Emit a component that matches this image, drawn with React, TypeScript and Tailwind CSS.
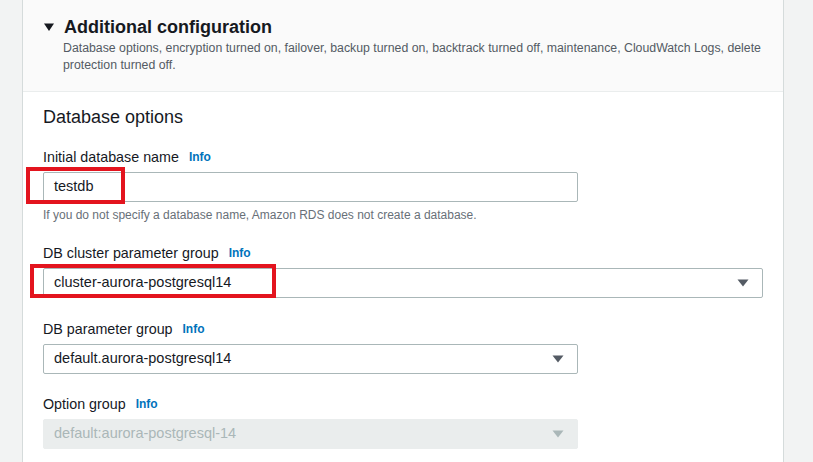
import { Fragment } from "react";

type FieldProps = {
  label: string;
  value: string;
  kind: "input" | "select" | "disabled";
  wide?: boolean;
  top: string;
  highlight?: string;
};

function Caret({ muted }: { muted?: boolean }) {
  return (
    <svg width="12" height="8" viewBox="0 0 12 8" aria-hidden="true">
      <path d="M0.5 0.5h11L6 7.5z" fill={muted ? "#aab7b8" : "#545b64"} />
    </svg>
  );
}

function Field({ label, value, kind, wide, top, highlight }: FieldProps) {
  const disabled = kind === "disabled";
  return (
    <div className={top}>
      <div className="flex items-center gap-[10px] leading-[20px]">
        <span className="text-[14.3px] text-[#16191f]">{label}</span>
        <span className="text-[12px] font-bold text-[#0073bb]">Info</span>
      </div>
      <div className={`relative mt-[5px] ${wide ? "w-[720px]" : "w-[535px]"}`}>
        <div
          className={`flex h-[30px] items-center justify-between rounded-[2px] border pl-[10px] pr-[13px] text-[14.5px] ${
            disabled
              ? "border-[#eaeded] bg-[#eaeded] text-[#aab7b8]"
              : "border-[#aab7b8] bg-white text-[#16191f]"
          }`}
        >
          <span>{value}</span>
          {kind !== "input" && <Caret muted={disabled} />}
        </div>
        {highlight && <div className={`absolute border-[4px] border-[#e3141e] ${highlight}`} />}
      </div>
    </div>
  );
}

export default function App() {
  return (
    <div className="flex h-[462px] w-[813px] overflow-hidden bg-[#f2f3f3] font-['Liberation_Sans',Arial,sans-serif]">
      <div className="w-[22px] shrink-0" />
      <div className="flex w-[762px] shrink-0 flex-col border-x border-[#d5dbdb] bg-white">
        <div className="border-b border-[#eaeded] bg-[#fafafa] pb-[17px] pl-[20px] pr-[20px] pt-[15px]">
          <div className="flex items-center gap-[10px] leading-[24px]">
            <svg width="10" height="8" viewBox="0 0 10 8" className="ml-[1px]" aria-hidden="true">
              <path d="M0 0.5h10L5 8z" fill="#16191f" />
            </svg>
            <span className="text-[18px] font-bold text-[#16191f]">Additional configuration</span>
          </div>
          <p className="ml-[20px] mt-[1px] text-[12.3px] leading-[17px] text-[#545b64]">
            Database options, encryption turned on, failover, backup turned on, backtrack turned off, maintenance,
            CloudWatch Logs, delete protection turned off.
          </p>
        </div>

        <div className="px-[20px] pt-[13px]">
          <h2 className="text-[18px] leading-[24px] text-[#16191f]">Database options</h2>

          <Fragment>
            <Field
              top="mt-[18px]"
              label="Initial database name"
              value="testdb"
              kind="input"
              highlight="-left-[17px] -top-[5px] h-[37px] w-[99px]"
            />
            <p className="mt-[5px] text-[12px] leading-[16px] text-[#687078]">
              If you do not specify a database name, Amazon RDS does not create a database.
            </p>
          </Fragment>

          <Field
            top="mt-[20px]"
            label="DB cluster parameter group"
            value="cluster-aurora-postgresql14"
            kind="select"
            wide
            highlight="-left-[13px] -top-[4px] h-[34px] w-[246px]"
          />
          <Field top="mt-[21px]" label="DB parameter group" value="default.aurora-postgresql14" kind="select" />
          <Field top="mt-[20px]" label="Option group" value="default:aurora-postgresql-14" kind="disabled" />
        </div>
      </div>
    </div>
  );
}
